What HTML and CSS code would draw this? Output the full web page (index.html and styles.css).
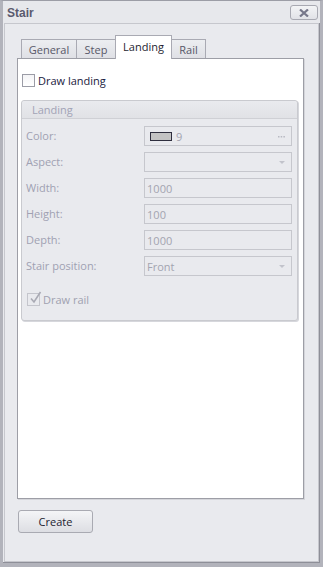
FILE: index.html
```html
<!DOCTYPE html>
<html>
<head>
<meta charset="utf-8">
<link rel="stylesheet" href="styles.css">
</head>
<body>
<div class="window">
  <div class="titlebar">
    <span class="title">Stair</span>
    <span class="close"><svg width="10" height="8" viewBox="0 0 10 8"><path d="M1 0.5 L9 7.5 M9 0.5 L1 7.5" stroke="#76778a" stroke-width="2.2" fill="none"/></svg></span>
  </div>
  <div class="client">
    <div class="tabs">
      <div class="tab t-general">General</div>
      <div class="tab t-step">Step</div>
      <div class="tab active t-landing">Landing</div>
      <div class="tab t-rail">Rail</div>
    </div>
    <div class="panel">
      <label class="check">
        <span class="box"></span>
        <span class="check-text">Draw landing</span>
      </label>
      <div class="group">
        <div class="group-head">Landing</div>
        <div class="group-body">
          <div class="row">
            <span class="label">Color:</span>
            <div class="field">
              <span class="swatch"></span><span class="val">9</span>
              <svg class="dots" width="7" height="2" viewBox="0 0 7 2"><rect x="0" y="0" width="1.5" height="1.5" fill="#b8b9c2"/><rect x="2.7" y="0" width="1.5" height="1.5" fill="#b8b9c2"/><rect x="5.4" y="0" width="1.5" height="1.5" fill="#b8b9c2"/></svg>
            </div>
          </div>
          <div class="row">
            <span class="label">Aspect:</span>
            <div class="field"><span class="val"></span><span class="arrow"></span></div>
          </div>
          <div class="row">
            <span class="label">Width:</span>
            <div class="field"><span class="val">1000</span></div>
          </div>
          <div class="row">
            <span class="label">Height:</span>
            <div class="field"><span class="val">100</span></div>
          </div>
          <div class="row">
            <span class="label">Depth:</span>
            <div class="field"><span class="val">1000</span></div>
          </div>
          <div class="row">
            <span class="label">Stair position:</span>
            <div class="field"><span class="val">Front</span><span class="arrow"></span></div>
          </div>
          <label class="check rail">
            <span class="box disabled"><svg width="14" height="14" viewBox="0 0 14 14"><path d="M3 7.5 L6 11 L12.5 1" stroke="#a9aab4" stroke-width="1.6" fill="none"/></svg></span>
            <span class="check-text dim">Draw rail</span>
          </label>
        </div>
      </div>
    </div>
    <div class="actions">
      <button class="btn">Create</button>
    </div>
  </div>
</div>
</body>
</html>
```
FILE: styles.css
```css
html, body {
  margin: 0;
  padding: 0;
  background: #e9eaee;
}
body {
  font-family: "Liberation Sans", Arial, sans-serif;
  font-size: 11px;
}
.window {
  width: 323px;
  height: 567px;
  box-sizing: border-box;
  background: #e9eaee;
  border-top: 1px solid #9c9da6;
  border-left: 3px solid #b2b3bb;
  border-right: 3px solid #b2b3bb;
  border-bottom: 4px solid #b2b3bb;
  box-shadow: inset -1px -1px 0 #8e8f98;
  display: flex;
  flex-direction: column;
}
.titlebar {
  height: 22px;
  flex: none;
  display: flex;
  align-items: flex-start;
  justify-content: space-between;
  padding: 0 2px 0 4px;
  background: #e7e8ec;
}
.title {
  font-weight: bold;
  font-size: 12px;
  color: #5a5a6e;
  margin-top: 5px;
}
.close {
  margin-top: 4px;
  width: 26px;
  height: 13px;
  border: 1px solid #a8a9b2;
  border-radius: 3px;
  background: linear-gradient(#f3f4f6, #e1e2e7);
  display: flex;
  align-items: center;
  justify-content: center;
}
.client {
  flex: 1;
  border: 1px solid #c6c7cd;
  margin: 0 1px 1px 1px;
  padding: 12px 14px 0 12px;
  display: flex;
  flex-direction: column;
}
.tabs {
  height: 22px;
  display: flex;
  align-items: flex-end;
  padding-left: 4px;
  position: relative;
  z-index: 1;
}
.tab {
  height: 19px;
  box-sizing: border-box;
  border: 1px solid #a9aab3;
  border-bottom: none;
  margin-right: -1px;
  background: linear-gradient(#eceef1, #dfe0e5);
  color: #585868;
  font-family: "Open Sans", "Liberation Sans", sans-serif;
  font-size: 11px;
  display: flex;
  align-items: center;
  justify-content: center;
  padding-top: 1px;
}
.t-general { width: 56px; }
.t-step { width: 40px; }
.t-landing { width: 57px; }
.t-rail { width: 35px; }
.tab.active {
  height: 24px;
  margin-bottom: -1px;
  background: #ffffff;
  color: #1e1e30;
  padding-top: 0;
  padding-bottom: 3px;
  position: relative;
  z-index: 2;
}
.panel {
  height: 441px;
  box-sizing: border-box;
  background: #ffffff;
  border: 1px solid #9d9ea6;
  box-shadow: 1px 1px 0 #d4d5da;
  padding: 15px 3px 0 3px;
  display: flex;
  flex-direction: column;
  align-items: stretch;
}
.check {
  display: flex;
  align-items: center;
  gap: 3px;
  height: 13px;
  margin-left: 1px;
}
.box {
  width: 11px;
  height: 11px;
  border: 1px solid #9b9ca6;
  background: linear-gradient(#f4f4f6, #ffffff);
  display: inline-block;
  position: relative;
  flex: none;
}
.box.disabled {
  border-color: #c4c5cc;
  background: #e9eaee;
}
.box svg {
  position: absolute;
  left: 0;
  top: -3px;
}
.check-text {
  font-family: "Open Sans", "Liberation Sans", sans-serif;
  color: #1a1a40;
  font-size: 11px;
}
.check-text.dim {
  color: #a0a1b0;
}
.group {
  margin-top: 13px;
  margin-right: 2px;
  border: 1px solid #c9cacf;
  border-radius: 3px;
  background: #e9eaee;
  box-shadow: 1px 1px 0 #d6d7dc;
}
.group-head {
  height: 17px;
  border-bottom: 1px solid #cfd0d5;
  background: linear-gradient(#e9eaee, #e1e2e6);
  color: #a2a3b6;
  font-family: "Open Sans", "Liberation Sans", sans-serif;
  font-size: 11px;
  padding-left: 10px;
  display: flex;
  align-items: center;
  border-radius: 3px 3px 0 0;
}
.group-body {
  padding: 7px 5px 14px 4px;
  display: flex;
  flex-direction: column;
  gap: 6px;
}
.row {
  display: flex;
  align-items: center;
  height: 20px;
}
.label {
  width: 119px;
  color: #a0a1b2;
  font-family: "Open Sans", "Liberation Sans", sans-serif;
  font-size: 11px;
  margin-top: -2px;
}
.field {
  width: 149px;
  height: 20px;
  box-sizing: border-box;
  border: 1px solid #c6c7cd;
  background: #e9eaee;
  display: flex;
  align-items: center;
  padding-left: 2px;
  padding-right: 6px;
  color: #a3a4b0;
  font-family: "Open Sans", "Liberation Sans", sans-serif;
  font-size: 11px;
}
.val {
  flex: 1;
}
.swatch {
  width: 20px;
  height: 7px;
  border: 1px solid #2e2e3e;
  background: #c3c3c3;
  margin-left: 3px;
  margin-right: 4px;
  flex: none;
}
.dots {
  flex: none;
  margin-top: 1px;
}
.arrow {
  width: 0;
  height: 0;
  border-left: 3px solid transparent;
  border-right: 3px solid transparent;
  border-top: 3px solid #c2c3cb;
  margin-right: 0;
}
.rail {
  margin-top: 11px;
  margin-left: 1px;
}
.actions {
  padding-top: 11px;
}
.btn {
  width: 75px;
  height: 23px;
  margin-left: 1px;
  border: 1px solid #a9aab2;
  border-radius: 3px;
  background: linear-gradient(#f4f5f7, #dddee3);
  color: #1c1c30;
  font-family: "Open Sans", "Liberation Sans", sans-serif;
  font-size: 11px;
  padding: 0;
}
```
